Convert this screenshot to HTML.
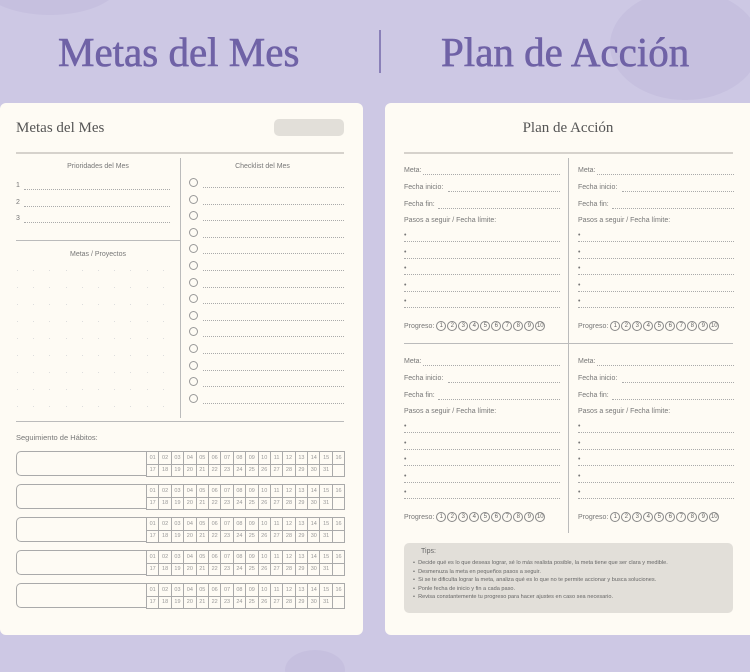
<!DOCTYPE html>
<html><head><meta charset="utf-8"><style>
*{margin:0;padding:0;box-sizing:border-box}
html,body{width:750px;height:672px;overflow:hidden}
body{background:#cdc8e4;position:relative;font-family:"Liberation Sans",sans-serif;color:#666}
.a{position:absolute}
.t{position:absolute;font-family:"Liberation Serif",serif;color:#6f62a6;font-size:41px;top:27px;white-space:nowrap;line-height:50px;-webkit-text-stroke:0.6px #6f62a6}
.card{position:absolute;background:#fefbf4;border-radius:6px;top:103px;height:532px}
.s{font-size:7px;color:#777;white-space:nowrap}
.dl{position:absolute;height:0;border-bottom:1px dotted #aaa}
.hl{position:absolute;height:2px;background:#d6d2cc}
.c{position:absolute;width:9px;height:9px;border:1px solid #999;border-radius:50%}
.pc{display:inline-block;width:10px;height:10px;border:1px solid #888;border-radius:50%;font-size:6px;text-align:center;line-height:9px;margin-right:1px;color:#666;vertical-align:middle}
table{border-collapse:collapse;position:absolute}
td{border:1px solid #aaa;width:12.4px;height:12.5px;font-size:5.5px;color:#999;text-align:center;padding:0}
</style></head><body>
<div class="a" style="left:-20px;top:-50px;width:140px;height:65px;border-radius:50%;background:#c6c0df"></div>
<div class="a" style="left:610px;top:-10px;width:150px;height:110px;border-radius:50%;background:#c6c0df"></div>
<div class="a" style="left:285px;top:650px;width:60px;height:40px;border-radius:50%;background:#c6c0df"></div>
<div class="t" style="left:58px">Metas del Mes</div>
<div class="a" style="left:379px;top:30px;width:2px;height:43px;background:#8a80b8"></div>
<div class="t" style="left:441px">Plan de Acción</div>

<div class="card" style="left:0;width:363px" id="L">
<div class="a" style="left:16px;top:17px;font-family:'Liberation Serif',serif;font-size:15px;color:#555">Metas del Mes</div>
<div class="a" style="left:274px;top:16px;width:70px;height:17px;border-radius:5px;background:#e2dfd9"></div>
<div class="hl" style="left:16px;top:49px;width:328px"></div>
<div class="a" style="left:180px;top:55px;width:1px;height:260px;background:#bbb"></div>
<div class="a s" style="left:16px;width:164px;text-align:center;top:60px">Prioridades del Mes</div>
<div class="a s" style="left:181px;width:163px;text-align:center;top:60px">Checklist del Mes</div>
<div class="a" style="left:16px;top:137px;width:164px;height:1px;background:#bbb"></div>
<div class="a s" style="left:16px;width:164px;text-align:center;top:148px">Metas / Proyectos</div>
<div class="a" style="left:16px;top:318px;width:328px;height:1px;background:#bbb"></div>
<div class="a s" style="left:16px;top:330px;font-size:7.5px">Seguimiento de Hábitos:</div>
</div>

<div class="card" style="left:385px;width:380px" id="R">
<div class="a" style="left:0;width:366px;text-align:center;top:17px;font-family:'Liberation Serif',serif;font-size:15px;color:#555">Plan de Acción</div>
<div class="hl" style="left:19px;top:49px;width:329px"></div>
<div class="a" style="left:183px;top:55px;width:1px;height:375px;background:#bbb"></div>
<div class="a" style="left:19px;top:240px;width:329px;height:1px;background:#bbb"></div>
<div class="a" style="left:19px;top:440px;width:329px;height:70px;border-radius:5px;background:#e2dfd9;font-size:5.6px;color:#666;padding:5px 0 0 9px;line-height:8.4px">
<div style="font-size:7px;margin:0 0 3px 8px">Tips:</div>
<div>•&nbsp; Decide qué es lo que deseas lograr, sé lo más realista posible, la meta tiene que ser clara y medible.</div>
<div>•&nbsp; Desmenuza la meta en pequeños pasos a seguir.</div>
<div>•&nbsp; Si se te dificulta lograr la meta, analiza qué es lo que no te permite accionar y busca soluciones.</div>
<div>•&nbsp; Ponle fecha de inicio y fin a cada paso.</div>
<div>•&nbsp; Revisa constantemente tu progreso para hacer ajustes en caso sea necesario.</div>
</div>
</div>
<script>
var L=document.getElementById('L'),R=document.getElementById('R'),h='';
['1','2','3'].forEach(function(n,i){var y=79+i*16.5;h+='<div class="a s" style="left:16px;top:'+y+'px">'+n+'</div><div class="dl" style="left:24px;width:146px;top:'+(y+7)+'px"></div>';});
for(var r=0;r<9;r++)for(var c=0;c<10;c++)h+='<div class="a" style="left:'+(17+c*16.2)+'px;top:'+(167+r*17)+'px;width:1px;height:1px;background:#ddd"></div>';
for(var i=0;i<14;i++){var y=75+i*16.6;h+='<div class="c" style="left:189px;top:'+y+'px"></div><div class="dl" style="left:203px;width:141px;top:'+(y+9)+'px"></div>';}
for(var k=0;k<5;k++){var y=348+k*33;h+='<div class="a" style="left:16px;top:'+y+'px;width:140px;height:25px;border:1px solid #aaa;border-radius:5px"></div><table style="left:146px;top:'+y+'px;background:#fefbf4"><tr>';
for(var d=1;d<=16;d++)h+='<td>'+(d<10?'0'+d:d)+'</td>';h+='</tr><tr>';for(var d=17;d<=32;d++)h+='<td>'+(d<32?d:'')+'</td>';h+='</tr></table>';}
L.insertAdjacentHTML('beforeend',h);
h='';
[[19,0],[193,0],[19,191],[193,191]].forEach(function(p){var x=p[0],o=p[1];
[['Meta:',64,19],['Fecha inicio:',81,44],['Fecha fin:',98,34]].forEach(function(q){h+='<div class="a s" style="left:'+x+'px;top:'+(o+q[1])+'px">'+q[0]+'</div><div class="dl" style="left:'+(x+q[2])+'px;width:'+(156-q[2])+'px;top:'+(o+q[1]+7)+'px"></div>';});
h+='<div class="a s" style="left:'+x+'px;top:'+(o+114)+'px">Pasos a seguir / Fecha límite:</div>';
for(var b=0;b<5;b++){var y=o+129+b*16.6;h+='<div class="a s" style="left:'+x+'px;top:'+y+'px">•</div><div class="dl" style="left:'+x+'px;width:156px;top:'+(y+9)+'px"></div>';}
h+='<div class="a s" style="left:'+x+'px;top:'+(o+218)+'px">Progreso: ';for(var n=1;n<=10;n++)h+='<span class="pc">'+n+'</span>';h+='</div>';});
R.insertAdjacentHTML('beforeend',h);
</script>
</body></html>
